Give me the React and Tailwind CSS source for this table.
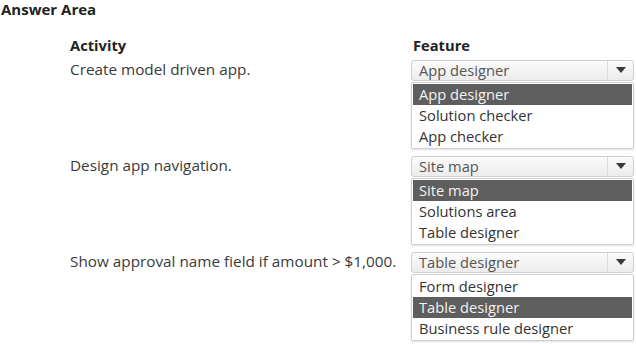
import React from "react";

const rows = [
  {
    activity: "Create model driven app.",
    selected: "App designer",
    options: ["App designer", "Solution checker", "App checker"],
    hi: 0,
  },
  {
    activity: "Design app navigation.",
    selected: "Site map",
    options: ["Site map", "Solutions area", "Table designer"],
    hi: 0,
  },
  {
    activity: "Show approval name field if amount > $1,000.",
    selected: "Table designer",
    options: ["Form designer", "Table designer", "Business rule designer"],
    hi: 1,
  },
];

function Dropdown({ selected, options, hi }) {
  return (
    <div className="w-[223px] text-[14.7px]">
      <div className="flex h-[21px] items-stretch rounded-[3px] border border-[#cfcfcf] bg-gradient-to-b from-[#fbfbfb] to-[#ececec]">
        <div className="flex flex-1 items-center pl-[7px] text-[#555]">{selected}</div>
        <div className="flex w-[26px] items-center justify-center border-l border-[#dcdcdc]">
          <svg width="10" height="6" viewBox="0 0 10 6">
            <path d="M0 0 L10 0 L5 6 Z" fill="#3a3a3a" />
          </svg>
        </div>
      </div>
      <div className="mt-[1px] rounded-[2px] border border-[#cfcfcf] bg-white px-[1px] py-[1px] shadow-[0_1px_2px_rgba(0,0,0,0.12)]">
        {options.map((o, i) => (
          <div
            key={o}
            className={
              "flex h-[21px] items-center pl-[6px] " +
              (i === hi ? "bg-[#5e5e5e] text-[#f2f2f2]" : "text-[#333]")
            }
          >
            {o}
          </div>
        ))}
      </div>
    </div>
  );
}

export default function App() {
  return (
    <div
      className="h-[344px] w-[636px] overflow-hidden bg-white leading-none text-[#3a3a3a]"
      style={{ fontFamily: '"Open Sans", "Noto Sans", sans-serif' }}
    >
      <div className="pl-[1px] pt-[1px] text-[15px] font-bold leading-[17px] text-[#222]">Answer Area</div>
      <div className="mt-[20px] flex pl-[70px] text-[14.7px] font-bold text-[#222]">
        <div className="w-[343px]">Activity</div>
        <div>Feature</div>
      </div>
      <div className="mt-[7px] flex flex-col">
        {rows.map((r, idx) => (
          <div key={idx} className="flex h-[96px] pl-[70px]">
            <div className="w-[341px] pt-[2px] text-[15.3px]">{r.activity}</div>
            <Dropdown selected={r.selected} options={r.options} hi={r.hi} />
          </div>
        ))}
      </div>
    </div>
  );
}
